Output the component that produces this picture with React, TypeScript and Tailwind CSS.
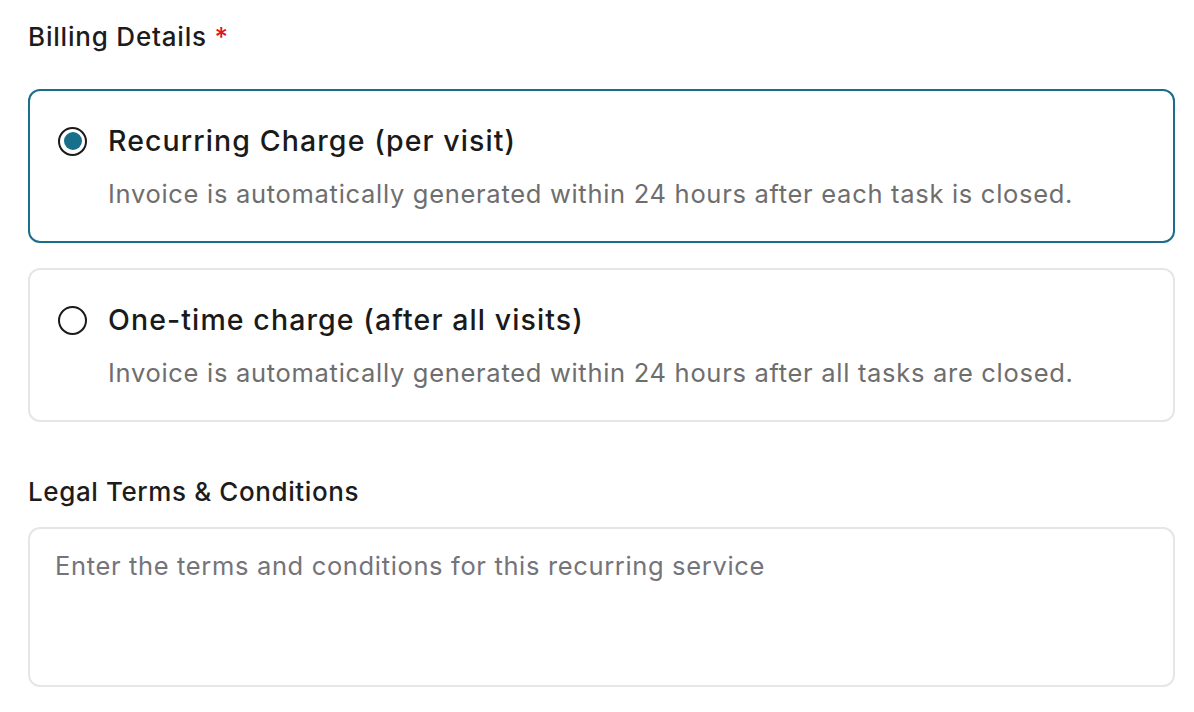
import React, { useState } from 'react';

const options = [
  {
    id: 'recurring',
    title: 'Recurring Charge (per visit)',
    desc: 'Invoice is automatically generated within 24 hours after each task is closed.',
  },
  {
    id: 'one-time',
    title: 'One-time charge (after all visits)',
    desc: 'Invoice is automatically generated within 24 hours after all tasks are closed.',
  },
];

const Radio = ({ checked }: { checked: boolean }) => (
  <span className="flex items-center justify-center w-[29px] h-[29px] rounded-full border-[2px] border-[#1a1a1a] bg-white shrink-0">
    {checked && <span className="w-[18px] h-[18px] rounded-full bg-[#176f8c]"></span>}
  </span>
);

const App: React.FC = () => {
  const [billing, setBilling] = useState('recurring');

  return (
    <div className="min-h-screen bg-white pl-[28px] pr-[19px] pt-[21px] font-['Inter','Liberation_Sans',sans-serif] text-[#1c1c1c]">
      <h3 className="text-[26px] leading-[32px] font-medium tracking-[0.8px]">
        Billing Details <span className="text-[#e0161d]">*</span>
      </h3>

      <div className="mt-[36px] flex flex-col gap-[25px]">
        {options.map((opt) => {
          const active = billing === opt.id;
          return (
            <div
              key={opt.id}
              role="radio"
              aria-checked={active}
              onClick={() => setBilling(opt.id)}
              className={`cursor-pointer rounded-[12px] border-[2px] pl-[28px] pr-[24px] pt-[30px] pb-[31px] ${
                active ? 'border-[#1a6e88]' : 'border-[#e6e6e6]'
              }`}
            >
              <div className="flex items-center gap-[21px]">
                <Radio checked={active} />
                <span className="text-[28.5px] leading-[40px] font-medium tracking-[1.1px] text-[#1a1a1a]">{opt.title}</span>
              </div>
              <p className="mt-[17px] pl-[50px] text-[25.5px] leading-[32px] text-[#6e6e6e] tracking-[0.7px]">{opt.desc}</p>
            </div>
          );
        })}
      </div>

      <h3 className="mt-[54px] text-[26px] leading-[32px] font-medium tracking-[0.6px]">Legal Terms &amp; Conditions</h3>

      <textarea
        placeholder="Enter the terms and conditions for this recurring service"
        className="mt-[19px] block w-full h-[160px] resize-none rounded-[12px] border-[2px] border-[#e6e6e6] px-[25px] pt-[21px] text-[25.5px] leading-[32px] tracking-[0.65px] text-[#1a1a1a] placeholder:text-[#74747a] outline-none"
      />
    </div>
  );
};

export default App;
